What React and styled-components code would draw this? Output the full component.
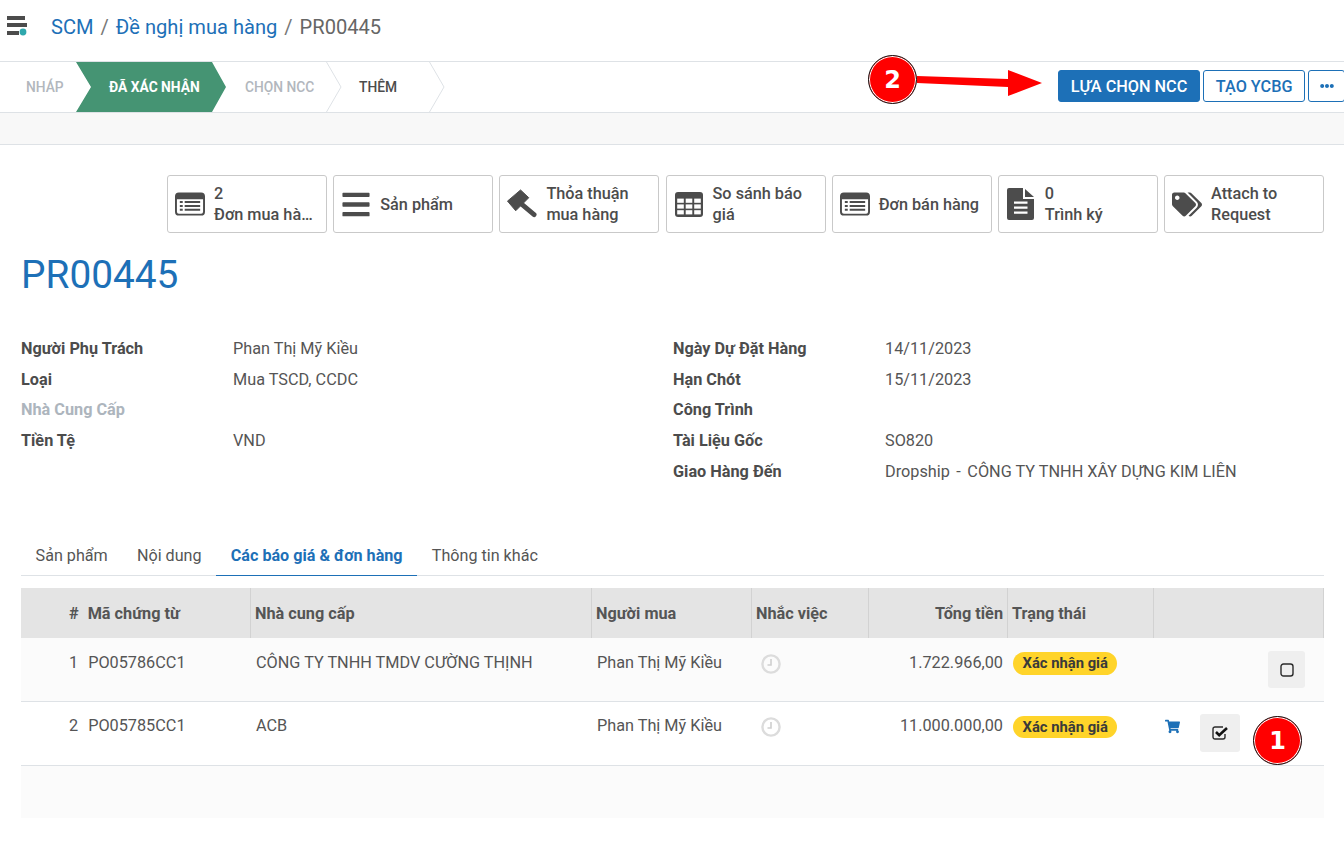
import React from 'react';
import styled, { createGlobalStyle } from 'styled-components';
import { FaBars, FaEllipsisH, FaTags, FaShoppingCart } from 'react-icons/fa';

const GlobalStyle = createGlobalStyle`
	html, body {
		margin: 0;
		padding: 0;
		background: #fff;
		font-family: Roboto, "Liberation Sans", sans-serif;
		color: #4c4c4c;
	}
`;

const Page = styled.div`
	position: relative;
	width: 1344px;
	height: 853px;
	overflow: hidden;
	background: #fff;
`;

const TopBar = styled.div`
	height: 62px;
	display: flex;
	align-items: center;
	padding: 0 0 7px 6px;
	box-sizing: border-box;
	border-bottom: 1px solid #dee2e6;
`;

const Crumbs = styled.div`
	display: flex;
	align-items: center;
	margin-left: 23px;
	font-size: 20.1px;
	color: #666;
`;

const CrumbLink = styled.span`
	color: #1d70b7;
`;

const CrumbSep = styled.span`
	margin: 0 7px;
	color: #777;
`;

const StatusBar = styled.div`
	height: 51px;
	display: flex;
	justify-content: space-between;
	box-sizing: border-box;
	border-bottom: 1px solid #dee2e6;
`;

const Steps = styled.div`
	display: flex;
	height: 50px;
`;

const Step = styled.div`
	position: relative;
	width: ${({ $w }) => $w}px;
	box-sizing: border-box;
	padding-left: ${({ $pad }) => $pad}px;
	display: flex;
	align-items: center;
	font-size: 13.8px;
	font-weight: 500;
	color: ${({ $dark }) => ($dark ? '#4c4c4c' : '#b2b7bd')};
`;

const ActiveStep = styled(Step)`
	color: #fff;
	font-weight: 700;
	background: #459473;
	clip-path: polygon(0 0, 136px 0, 150px 50%, 136px 100%, 0 100%, 15px 50%);
`;

const Chevron = styled.svg`
	position: absolute;
	right: -1px;
	top: 0;
	width: 16px;
	height: 50px;
`;

const Actions = styled.div`
	display: flex;
	align-items: center;
	gap: 3px;
	padding-bottom: 2px;
	margin-right: -1px;
`;

const Primary = styled.button`
	height: 32px;
	padding: 0 12px;
	border: 1px solid #1d70b7;
	border-radius: 3px;
	background: #1d70b7;
	color: #fff;
	font: 500 16.25px Roboto, sans-serif;
`;

const Secondary = styled(Primary)`
	padding: 0 11.5px;
	background: #fff;
	color: #1d70b7;
`;

const MoreDots = styled(Secondary)`
	width: 37px;
	padding: 0;
	font-size: 14px;
	display: flex;
	align-items: center;
	justify-content: center;
`;

const Band = styled.div`
	height: 31px;
	background: #f8f8f8;
	border-bottom: 1px solid #dee2e6;
`;

const Sheet = styled.div`
	padding: 30px 20px 0 21px;
`;

const ButtonBox = styled.div`
	display: flex;
	justify-content: flex-end;
	gap: 6.16px;
`;

const BoxButton = styled.div`
	width: 160px;
	height: 58px;
	box-sizing: border-box;
	border: 1px solid #c9c9c9;
	border-radius: 3px;
	display: flex;
	align-items: center;
	padding-left: 7px;
	gap: 9px;
	font-size: 16.25px;
	line-height: 21px;
	color: #4c4c4c;
	font-weight: 500;
	flex: none;
`;

const BoxIcon = styled.span`
	display: flex;
	justify-content: center;
	width: 30px;
	flex: none;
	color: #4c4c4c;
	font-size: ${({ $size }) => $size || 31}px;
`;

const BoxLabel = styled.div`
	white-space: pre-line;
`;

const Title = styled.h1`
	margin: 18px 0 0;
	font-size: 38.8px;
	line-height: 48px;
	font-weight: 400;
	color: #1d70b7;
`;

const Fields = styled.div`
	display: grid;
	grid-template-columns: 652px 1fr;
	margin-top: 34px;
	font-size: 16.25px;
`;

const FieldCol = styled.div`
	display: grid;
	grid-template-columns: 212px 1fr;
	grid-auto-rows: 30.7px;
	align-items: center;
`;

const Label = styled.div`
	font-weight: 700;
	color: ${({ $muted }) => ($muted ? '#adb5bd' : '#4c4c4c')};
`;

const Value = styled.div`
	color: #555;
`;

const Dash = styled.span`
	margin: 0 6.5px;
`;

const Tabs = styled.div`
	display: flex;
	margin-top: 49px;
	height: 40px;
	border-bottom: 1px solid #dee2e6;
	font-size: 16.15px;
`;

const Tab = styled.div`
	display: flex;
	align-items: center;
	padding: 0 14.6px;
	color: ${({ $active }) => ($active ? '#1d70b7' : '#555')};
	font-weight: ${({ $active }) => ($active ? 700 : 400)};
	border-bottom: ${({ $active }) => ($active ? '1px solid #1d70b7' : 'none')};
	height: ${({ $active }) => ($active ? '40px' : 'auto')};
`;

const Table = styled.div`
	margin-top: 12px;
	display: grid;
	grid-template-columns: 230px 341px 160px 117px 139px 146px 170px;
	font-size: 16.25px;
`;

const HeadCell = styled.div`
	height: 50px;
	box-sizing: border-box;
	background: #e4e4e4;
	display: flex;
	align-items: center;
	justify-content: ${({ $right }) => ($right ? 'flex-end' : 'flex-start')};
	padding: 0 4px;
	font-weight: 700;
	color: #555;
	border-right: 1px solid #d2d2d2;
	&:last-child {
		border-right: none;
	}
`;

const HeadFirst = styled(HeadCell)`
	padding-left: 48px;
	gap: 9px;
`;

const Cell = styled.div`
	height: 64px;
	box-sizing: border-box;
	background: ${({ $odd }) => ($odd ? '#fbfbfb' : '#fff')};
	border-bottom: 1px solid #dee2e6;
	display: flex;
	padding: ${({ $odd }) => ($odd ? 15 : 14)}px 5px 0;
	justify-content: ${({ $right }) => ($right ? 'flex-end' : 'flex-start')};
	color: #555;
	line-height: 20px;
`;

const NumCell = styled(Cell)`
	padding-left: 48px;
	gap: 10px;
`;

const ActionCell = styled(Cell)`
	position: relative;
	padding: 0;
`;

const ClockIcon = styled.svg`
	width: 20px;
	height: 20px;
	margin: 1px 0 0 4px;
`;

const Badge = styled.span`
	height: ${({ $odd }) => ($odd ? 23 : 22)}px;
	margin-top: ${({ $odd }) => ($odd ? -1 : 0)}px;
	padding: 0 9.5px;
	border-radius: 12px;
	background: #ffd42a;
	color: #3a3a3a;
	font-size: 14.8px;
	font-weight: 700;
	line-height: 22px;
`;

const SelectBtn = styled.div`
	position: absolute;
	top: ${({ $checked }) => ($checked ? 12 : 13)}px;
	right: ${({ $checked }) => ($checked ? 84 : 19)}px;
	width: ${({ $checked }) => ($checked ? 40 : 37)}px;
	height: ${({ $checked }) => ($checked ? 38 : 37)}px;
	background: #efefef;
	border-radius: 3px;
	display: flex;
	align-items: center;
	justify-content: center;
`;

const Cart = styled(FaShoppingCart)`
	position: absolute;
	top: 17px;
	left: 11px;
	color: #1d70b7;
	font-size: 15px;
`;

const FooterRow = styled.div`
	height: 52px;
	background: #fbfbfb;
	grid-column: 1 / -1;
`;

const Marker = styled.div`
	position: absolute;
	left: ${({ $x }) => $x}px;
	top: ${({ $y }) => $y}px;
	width: 49px;
	height: 49px;
	box-sizing: border-box;
	border-radius: 50%;
	background: #ff0000;
	border: 1px solid #111;
	box-shadow: inset 0 0 0 1px #fff;
	color: #fff;
	font: 700 24px "DejaVu Sans", sans-serif;
	display: flex;
	align-items: center;
	justify-content: center;
`;

const Arrow = styled.svg`
	position: absolute;
	left: 915px;
	top: 68px;
	width: 132px;
	height: 32px;
`;

const INK = '#4c4c4c';

function ListAlt() {
	return (
		<svg width="31" height="24" viewBox="0 0 31 24">
			<rect x="1" y="1" width="29" height="22" rx="3" fill="none" stroke={INK} strokeWidth="2" />
			<path d="M1 4a3 3 0 0 1 3-3h23a3 3 0 0 1 3 3v3H1z" fill={INK} />
			<path d="M5 9h3v2H5zM5 13h3v2H5zM5 17h3v2H5zM10 9h16v2H10zM10 13h16v2H10zM10 17h16v2H10z" fill={INK} />
		</svg>
	);
}

function Gavel() {
	return (
		<svg width="31" height="32" viewBox="0 0 31 32">
			<path d="M0.5 13L14 1.5L22.5 9.5L9 23z" fill={INK} stroke={INK} strokeLinejoin="round" />
			<path d="M16 17L28 27" stroke={INK} strokeWidth="5" strokeLinecap="round" />
		</svg>
	);
}

function TableIcon() {
	const cols = [2.2, 10.7, 19.2];
	const rows = [6.6, 12.4, 18.2];
	return (
		<svg width="28" height="25" viewBox="0 0 28 25">
			<rect width="28" height="25" rx="3" fill={INK} />
			{rows.map((y) =>
				cols.map((x) => <rect key={`${x}-${y}`} x={x} y={y} width="6.6" height="4.2" fill="#fff" />)
			)}
		</svg>
	);
}

function FileText() {
	return (
		<svg width="27" height="32" viewBox="0 0 27 32">
			<path d="M2 0H16V11H27V30a2 2 0 0 1-2 2H2a2 2 0 0 1-2-2V2a2 2 0 0 1 2-2z" fill={INK} />
			<path d="M18 1L27 9H18z" fill={INK} />
			<path d="M7 13.5h13.5v2.2H7zM7 18.5h13.5v2.2H7zM7 23.5h13.5v2.2H7z" fill="#fff" />
		</svg>
	);
}

function Logo() {
	return (
		<svg width="22" height="22" viewBox="0 0 22 22">
			<path d="M1 0h18v4H1zM1 7h20v4H1zM1 15h12v4H1z" fill={INK} />
			<circle cx="17" cy="16" r="3.4" fill="#2fa8ad" />
		</svg>
	);
}

function Clock() {
	return (
		<ClockIcon viewBox="0 0 20 20">
			<circle cx="10" cy="10" r="8.6" fill="none" stroke="#dcdcdc" strokeWidth="2.4" />
			<path d="M10 5v6H6.5" fill="none" stroke="#cfcfcf" strokeWidth="1.6" />
		</ClockIcon>
	);
}

function SquareOff() {
	return (
		<svg width="14" height="14" viewBox="0 0 14 14">
			<rect x="1" y="1" width="12" height="12" rx="2.5" fill="none" stroke="#2b2b2b" strokeWidth="1.4" />
		</svg>
	);
}

function SquareOn() {
	return (
		<svg width="17" height="14" viewBox="0 0 17 14">
			<path d="M13 8v3a2 2 0 0 1-2 2H3a2 2 0 0 1-2-2V3a2 2 0 0 1 2-2h8" fill="none" stroke="#2b2b2b" strokeWidth="1.4" />
			<path d="M4 6l3.2 3.2L15 2" fill="none" stroke="#111" strokeWidth="2.6" />
		</svg>
	);
}

const stepChevron = (
	<Chevron viewBox="0 0 16 50">
		<path d="M0.5 0L15 25L0.5 50" fill="none" stroke="#dee2e6" />
	</Chevron>
);

const boxes = [
	{ id: 'po', icon: <ListAlt />, text: '2\nĐơn mua hà…' },
	{ id: 'products', icon: <FaBars />, text: 'Sản phẩm' },
	{ id: 'agreement', icon: <Gavel />, text: 'Thỏa thuận\nmua hàng' },
	{ id: 'compare', icon: <TableIcon />, text: 'So sánh báo\ngiá' },
	{ id: 'so', icon: <ListAlt />, text: 'Đơn bán hàng' },
	{ id: 'sign', icon: <FileText />, text: '0\nTrình ký' },
	{ id: 'attach', icon: <FaTags />, size: 33, text: 'Attach to\nRequest' },
];

const leftFields = [
	['Người Phụ Trách', 'Phan Thị Mỹ Kiều'],
	['Loại', 'Mua TSCD, CCDC'],
	['Nhà Cung Cấp', '', true],
	['Tiền Tệ', 'VND'],
];

const rightFields = [
	['Ngày Dự Đặt Hàng', '14/11/2023'],
	['Hạn Chót', '15/11/2023'],
	['Công Trình', ''],
	['Tài Liệu Gốc', 'SO820'],
	['Giao Hàng Đến', <>Dropship<Dash>-</Dash>CÔNG TY TNHH XÂY DỰNG KIM LIÊN</>],
];

const rows = [
	{ no: 1, code: 'PO05786CC1', vendor: 'CÔNG TY TNHH TMDV CƯỜNG THỊNH', total: '1.722.966,00', odd: true },
	{ no: 2, code: 'PO05785CC1', vendor: 'ACB', total: '11.000.000,00', selected: true },
];

export default function App() {
	return (
		<Page>
			<GlobalStyle />
			<TopBar>
				<Logo />
				<Crumbs>
					<CrumbLink>SCM</CrumbLink>
					<CrumbSep>/</CrumbSep>
					<CrumbLink>Đề nghị mua hàng</CrumbLink>
					<CrumbSep>/</CrumbSep>
					<span>PR00445</span>
				</Crumbs>
			</TopBar>
			<StatusBar>
				<Steps>
					<Step $w={76} $pad={26}>NHÁP</Step>
					<ActiveStep $w={150} $pad={33}>ĐÃ XÁC NHẬN</ActiveStep>
					<Step $w={115} $pad={19}>CHỌN NCC{stepChevron}</Step>
					<Step $w={103} $pad={18} $dark>THÊM{stepChevron}</Step>
				</Steps>
				<Actions>
					<Primary>LỰA CHỌN NCC</Primary>
					<Secondary>TẠO YCBG</Secondary>
					<MoreDots><FaEllipsisH /></MoreDots>
				</Actions>
			</StatusBar>
			<Band />
			<Sheet>
				<ButtonBox>
					{boxes.map((b) => (
						<BoxButton key={b.id}>
							<BoxIcon $size={b.size}>{b.icon}</BoxIcon>
							<BoxLabel>{b.text}</BoxLabel>
						</BoxButton>
					))}
				</ButtonBox>
				<Title>PR00445</Title>
				<Fields>
					<FieldCol>
						{leftFields.map(([k, v, muted]) => (
							<React.Fragment key={k}>
								<Label $muted={muted}>{k}</Label>
								<Value>{v}</Value>
							</React.Fragment>
						))}
					</FieldCol>
					<FieldCol>
						{rightFields.map(([k, v]) => (
							<React.Fragment key={k}>
								<Label>{k}</Label>
								<Value>{v}</Value>
							</React.Fragment>
						))}
					</FieldCol>
				</Fields>
				<Tabs>
					<Tab>Sản phẩm</Tab>
					<Tab>Nội dung</Tab>
					<Tab $active>Các báo giá &amp; đơn hàng</Tab>
					<Tab>Thông tin khác</Tab>
				</Tabs>
				<Table>
					<HeadFirst><span>#</span><span>Mã chứng từ</span></HeadFirst>
					<HeadCell>Nhà cung cấp</HeadCell>
					<HeadCell>Người mua</HeadCell>
					<HeadCell>Nhắc việc</HeadCell>
					<HeadCell $right>Tổng tiền</HeadCell>
					<HeadCell>Trạng thái</HeadCell>
					<HeadCell />
					{rows.map((r) => (
						<React.Fragment key={r.no}>
							<NumCell $odd={r.odd}><span>{r.no}</span><span>{r.code}</span></NumCell>
							<Cell $odd={r.odd}>{r.vendor}</Cell>
							<Cell $odd={r.odd}>Phan Thị Mỹ Kiều</Cell>
							<Cell $odd={r.odd}><Clock /></Cell>
							<Cell $odd={r.odd} $right>{r.total}</Cell>
							<Cell $odd={r.odd}><Badge $odd={r.odd}>Xác nhận giá</Badge></Cell>
							<ActionCell $odd={r.odd}>
								{r.selected && <Cart />}
								<SelectBtn $checked={r.selected}>
									{r.selected ? <SquareOn /> : <SquareOff />}
								</SelectBtn>
							</ActionCell>
						</React.Fragment>
					))}
					<FooterRow />
				</Table>
			</Sheet>
			<Marker $x={868} $y={55}>2</Marker>
			<Arrow viewBox="0 0 132 32">
				<path d="M2 8L93 11V2L127 15L93 28V19L2 15z" fill="#ff0000" />
			</Arrow>
			<Marker $x={1253} $y={716}>1</Marker>
		</Page>
	);
}
